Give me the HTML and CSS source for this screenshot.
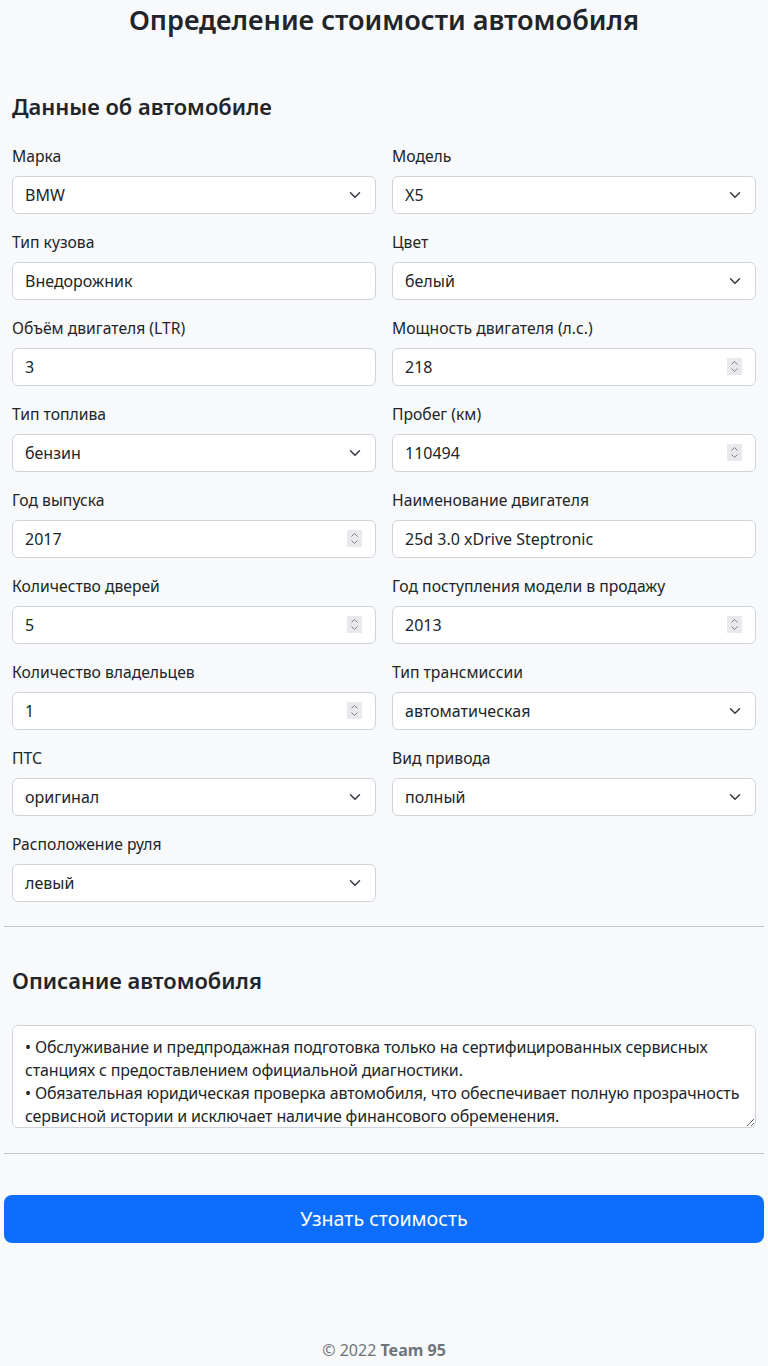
FILE: index.html
```html
<!DOCTYPE html>
<html lang="ru">
<head>
<meta charset="utf-8">
<title>Определение стоимости автомобиля</title>
<link rel="stylesheet" href="styles.css">
</head>
<body>
<main class="page">
  <h1 class="page-title">Определение стоимости автомобиля</h1>
  <form class="form">
    <section class="section">
      <h2 class="section-title">Данные об автомобиле</h2>
      <div class="grid">
        <div class="field"><label class="label">Марка</label>
          <div class="control select"><span>BMW</span><svg class="chev" width="16" height="12" viewBox="0 0 16 16"><path d="m2 5 6 6 6-6" fill="none" stroke="#343a40" stroke-width="2" stroke-linecap="round" stroke-linejoin="round"/></svg></div></div>
        <div class="field"><label class="label">Модель</label>
          <div class="control select"><span>X5</span><svg class="chev" width="16" height="12" viewBox="0 0 16 16"><path d="m2 5 6 6 6-6" fill="none" stroke="#343a40" stroke-width="2" stroke-linecap="round" stroke-linejoin="round"/></svg></div></div>
        <div class="field"><label class="label">Тип кузова</label>
          <input class="control" type="text" value="Внедорожник"></div>
        <div class="field"><label class="label">Цвет</label>
          <div class="control select"><span>белый</span><svg class="chev" width="16" height="12" viewBox="0 0 16 16"><path d="m2 5 6 6 6-6" fill="none" stroke="#343a40" stroke-width="2" stroke-linecap="round" stroke-linejoin="round"/></svg></div></div>
        <div class="field"><label class="label">Объём двигателя (LTR)</label>
          <input class="control" type="text" value="3"></div>
        <div class="field"><label class="label">Мощность двигателя (л.с.)</label>
          <div class="control number"><input class="num-input" type="number" value="218"><svg class="spin" width="15" height="17" viewBox="0 0 15 17"><rect width="15" height="17" fill="#e9e9ed"/><path d="M4.5 6.5 7.5 3.5 10.5 6.5M4.5 10.5 7.5 13.5 10.5 10.5" fill="none" stroke="#808085" stroke-width="1"/></svg></div></div>
        <div class="field"><label class="label">Тип топлива</label>
          <div class="control select"><span>бензин</span><svg class="chev" width="16" height="12" viewBox="0 0 16 16"><path d="m2 5 6 6 6-6" fill="none" stroke="#343a40" stroke-width="2" stroke-linecap="round" stroke-linejoin="round"/></svg></div></div>
        <div class="field"><label class="label">Пробег (км)</label>
          <div class="control number"><input class="num-input" type="number" value="110494"><svg class="spin" width="15" height="17" viewBox="0 0 15 17"><rect width="15" height="17" fill="#e9e9ed"/><path d="M4.5 6.5 7.5 3.5 10.5 6.5M4.5 10.5 7.5 13.5 10.5 10.5" fill="none" stroke="#808085" stroke-width="1"/></svg></div></div>
        <div class="field"><label class="label">Год выпуска</label>
          <div class="control number"><input class="num-input" type="number" value="2017"><svg class="spin" width="15" height="17" viewBox="0 0 15 17"><rect width="15" height="17" fill="#e9e9ed"/><path d="M4.5 6.5 7.5 3.5 10.5 6.5M4.5 10.5 7.5 13.5 10.5 10.5" fill="none" stroke="#808085" stroke-width="1"/></svg></div></div>
        <div class="field"><label class="label">Наименование двигателя</label>
          <input class="control" type="text" value="25d 3.0 xDrive Steptronic"></div>
        <div class="field"><label class="label">Количество дверей</label>
          <div class="control number"><input class="num-input" type="number" value="5"><svg class="spin" width="15" height="17" viewBox="0 0 15 17"><rect width="15" height="17" fill="#e9e9ed"/><path d="M4.5 6.5 7.5 3.5 10.5 6.5M4.5 10.5 7.5 13.5 10.5 10.5" fill="none" stroke="#808085" stroke-width="1"/></svg></div></div>
        <div class="field"><label class="label">Год поступления модели в продажу</label>
          <div class="control number"><input class="num-input" type="number" value="2013"><svg class="spin" width="15" height="17" viewBox="0 0 15 17"><rect width="15" height="17" fill="#e9e9ed"/><path d="M4.5 6.5 7.5 3.5 10.5 6.5M4.5 10.5 7.5 13.5 10.5 10.5" fill="none" stroke="#808085" stroke-width="1"/></svg></div></div>
        <div class="field"><label class="label">Количество владельцев</label>
          <div class="control number"><input class="num-input" type="number" value="1"><svg class="spin" width="15" height="17" viewBox="0 0 15 17"><rect width="15" height="17" fill="#e9e9ed"/><path d="M4.5 6.5 7.5 3.5 10.5 6.5M4.5 10.5 7.5 13.5 10.5 10.5" fill="none" stroke="#808085" stroke-width="1"/></svg></div></div>
        <div class="field"><label class="label">Тип трансмиссии</label>
          <div class="control select"><span>автоматическая</span><svg class="chev" width="16" height="12" viewBox="0 0 16 16"><path d="m2 5 6 6 6-6" fill="none" stroke="#343a40" stroke-width="2" stroke-linecap="round" stroke-linejoin="round"/></svg></div></div>
        <div class="field"><label class="label">ПТС</label>
          <div class="control select"><span>оригинал</span><svg class="chev" width="16" height="12" viewBox="0 0 16 16"><path d="m2 5 6 6 6-6" fill="none" stroke="#343a40" stroke-width="2" stroke-linecap="round" stroke-linejoin="round"/></svg></div></div>
        <div class="field"><label class="label">Вид привода</label>
          <div class="control select"><span>полный</span><svg class="chev" width="16" height="12" viewBox="0 0 16 16"><path d="m2 5 6 6 6-6" fill="none" stroke="#343a40" stroke-width="2" stroke-linecap="round" stroke-linejoin="round"/></svg></div></div>
        <div class="field"><label class="label">Расположение руля</label>
          <div class="control select"><span>левый</span><svg class="chev" width="16" height="12" viewBox="0 0 16 16"><path d="m2 5 6 6 6-6" fill="none" stroke="#343a40" stroke-width="2" stroke-linecap="round" stroke-linejoin="round"/></svg></div></div>
      </div>
    </section>
    <hr class="divider">
    <section class="section section-desc">
      <h2 class="section-title">Описание автомобиля</h2>
      <textarea class="control textarea">• Обслуживание и предпродажная подготовка только на сертифицированных сервисных станциях с предоставлением официальной диагностики.
• Обязательная юридическая проверка автомобиля, что обеспечивает полную прозрачность сервисной истории и исключает наличие финансового обременения.</textarea>
    </section>
    <hr class="divider">
    <button class="submit" type="button">Узнать стоимость</button>
  </form>
  <footer class="footer">© 2022 <b>Team 95</b></footer>
</main>
</body>
</html>
```

FILE: styles.css
```css
* { box-sizing: border-box; }
html, body { margin: 0; padding: 0; }
body {
  background: #f8f9fa;
  color: #212529;
  font-family: "Noto Sans", "Open Sans", sans-serif;
  font-size: 16px;
  line-height: 1.5;
}
.page {
  min-height: 1366px;
  display: flex;
  flex-direction: column;
  padding: 0 4px;
}
.page-title {
  margin: 4px 0 0;
  text-align: center;
  font-size: 27.1px;
  font-weight: 600;
  line-height: 1.2;
}
.form { display: flex; flex-direction: column; }
.section { padding: 0 8px; }
.section-title {
  margin: 57px 0 24px;
  font-size: 21.9px;
  font-weight: 600;
  line-height: 1.2;
}
.grid {
  display: grid;
  grid-template-columns: 1fr 1fr;
  column-gap: 16px;
  row-gap: 16px;
}
.field { display: flex; flex-direction: column; min-width: 0; }
.label { display: block; margin-bottom: 8px; line-height: 24px; font-size: 15.7px; }
.control {
  display: block;
  width: 100%;
  height: 38px;
  padding: 6px 12px;
  font: inherit;
  line-height: 24px;
  color: #212529;
  background: #fff;
  border: 1px solid #ced4da;
  border-radius: 6px;
}
.select, .number {
  display: flex;
  align-items: center;
  justify-content: space-between;
}
.chev { flex: none; }
.num-input {
  flex: 1;
  min-width: 0;
  border: 0;
  padding: 0;
  margin: 0;
  background: transparent;
  font: inherit;
  line-height: 24px;
  color: inherit;
  outline: none;
}
.num-input::-webkit-inner-spin-button,
.num-input::-webkit-outer-spin-button {
  -webkit-appearance: none;
  margin: 0;
}
.spin { flex: none; margin-right: 1px; }
.divider {
  margin: 24px 0 0;
  border: 0;
  border-top: 1px solid #c6c7c8;
  height: 0;
}
.section-desc .section-title { margin: 41px 0 31px; }
.textarea {
  height: 103px;
  padding-top: 10px;
  resize: vertical;
  overflow: auto;
  line-height: 23px;
  letter-spacing: -0.15px;
}
.section-desc + .divider { margin-top: 25px; }
.submit {
  margin-top: 41px;
  height: 48px;
  width: 100%;
  border: 0;
  border-radius: 8px;
  background: #0d6efd;
  color: #fff;
  font: inherit;
  font-size: 19.6px;
  line-height: 30px;
  cursor: pointer;
}
.footer {
  margin-top: auto;
  padding-bottom: 4px;
  text-align: center;
  color: #6c757d;
}
.footer b { font-weight: 700; }
```
